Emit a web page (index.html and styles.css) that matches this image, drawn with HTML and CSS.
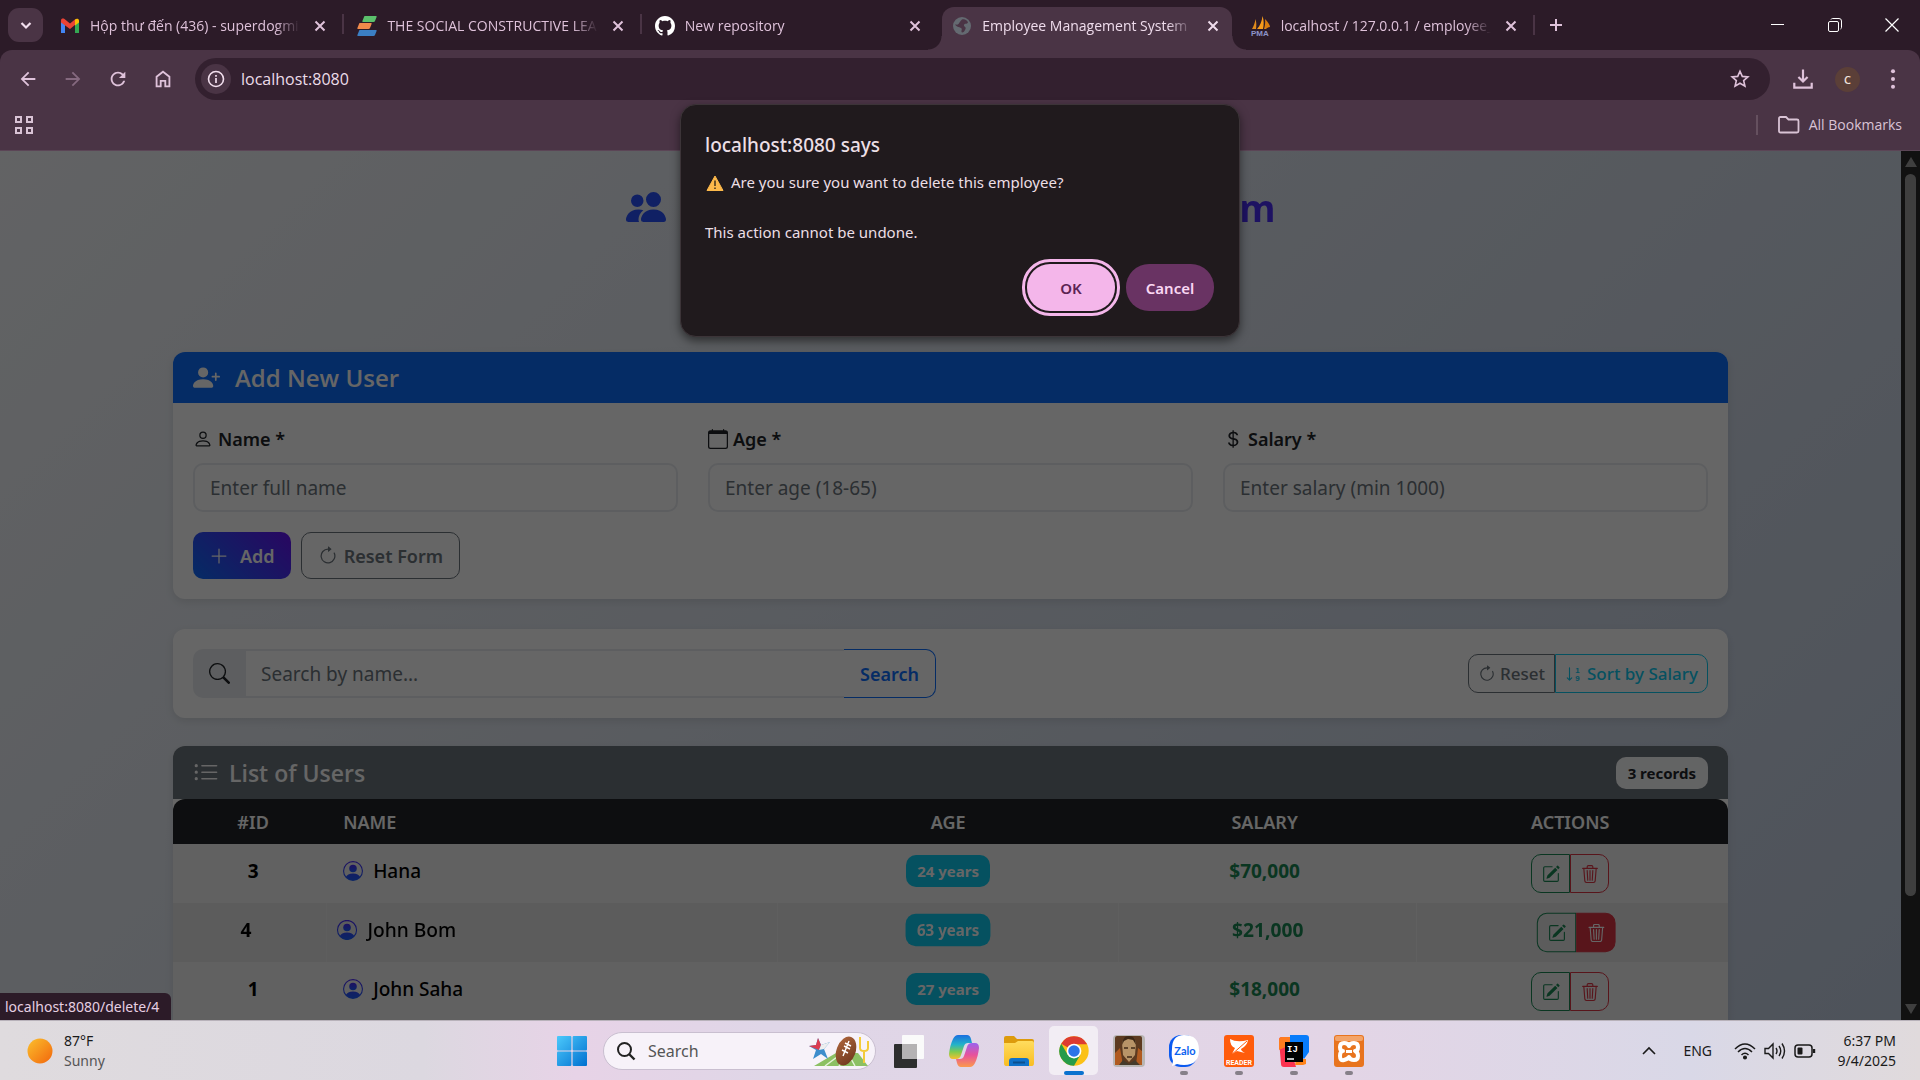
FILE: index.html
```html
<!DOCTYPE html>
<html lang="en">
<head>
<meta charset="utf-8">
<meta name="viewport" content="width=device-width, initial-scale=1">
<title>Employee Management System</title>
<link rel="stylesheet" href="styles.css">
</head>
<body>
<svg class="sprite" width="0" height="0" aria-hidden="true">
  <defs>
    <linearGradient id="g-brand-v" x1="0" y1="1" x2="0" y2="0"><stop offset="0" stop-color="#1c5ffb"/><stop offset="1" stop-color="#4d2af6"/></linearGradient>
    <linearGradient id="g-sun" x1="0" y1="0" x2="1" y2="1"><stop offset="0" stop-color="#fbc02d"/><stop offset="1" stop-color="#f2660c"/></linearGradient>
    <linearGradient id="g-win" gradientUnits="userSpaceOnUse" x1="0" y1="0" x2="30" y2="30"><stop offset="0" stop-color="#4cc9fb"/><stop offset="1" stop-color="#0070d0"/></linearGradient>
    <linearGradient id="g-folder" x1="0" y1="0" x2="0" y2="1"><stop offset="0" stop-color="#ffdc5e"/><stop offset="1" stop-color="#f9bd23"/></linearGradient>
    <linearGradient id="g-cop1" x1="0" y1="0" x2="0" y2="1"><stop offset="0" stop-color="#1a6fe0"/><stop offset=".4" stop-color="#22b3c9"/><stop offset=".7" stop-color="#7fcb4d"/><stop offset="1" stop-color="#f6c12e"/></linearGradient>
    <linearGradient id="g-cop2" x1="0" y1="0" x2="0" y2="1"><stop offset="0" stop-color="#9a63ee"/><stop offset=".5" stop-color="#e8529b"/><stop offset="1" stop-color="#fb9a4b"/></linearGradient>
    <linearGradient id="g-ball" x1="0" y1="0" x2="1" y2="1"><stop offset="0" stop-color="#b0673c"/><stop offset="1" stop-color="#6b341c"/></linearGradient>
    <symbol id="i-people" viewBox="0 0 16 16"><path d="M7 14s-1 0-1-1 1-4 5-4 5 3 5 4-1 1-1 1zm4-6a3 3 0 1 0 0-6 3 3 0 0 0 0 6m-5.784 6A2.24 2.24 0 0 1 5 13c0-1.355.68-2.75 1.936-3.72A6.3 6.3 0 0 0 5 9c-4 0-5 3-5 4s1 1 1 1zM4.5 8a2.5 2.5 0 1 0 0-5 2.5 2.5 0 0 0 0 5"/></symbol>
    <symbol id="i-person-plus" viewBox="0 0 16 16"><path d="M1 14s-1 0-1-1 1-4 6-4 6 3 6 4-1 1-1 1zm5-6a3 3 0 1 0 0-6 3 3 0 0 0 0 6"/><path d="M13.5 5a.5.5 0 0 1 .5.5V7h1.5a.5.5 0 0 1 0 1H14v1.5a.5.5 0 0 1-1 0V8h-1.5a.5.5 0 0 1 0-1H13V5.5a.5.5 0 0 1 .5-.5"/></symbol>
    <symbol id="i-person" viewBox="0 0 16 16"><path d="M8 8a3 3 0 1 0 0-6 3 3 0 0 0 0 6m2-3a2 2 0 1 1-4 0 2 2 0 0 1 4 0m4 8c0 1-1 1-1 1H3s-1 0-1-1 1-4 6-4 6 3 6 4m-1-.004c-.001-.246-.154-.986-.832-1.664C11.516 10.68 10.289 10 8 10s-3.516.68-4.168 1.332c-.678.678-.83 1.418-.832 1.664z"/></symbol>
    <symbol id="i-calendar" viewBox="0 0 16 16"><path d="M3.5 0a.5.5 0 0 1 .5.5V1h8V.5a.5.5 0 0 1 1 0V1h1a2 2 0 0 1 2 2v11a2 2 0 0 1-2 2H2a2 2 0 0 1-2-2V3a2 2 0 0 1 2-2h1V.5a.5.5 0 0 1 .5-.5M1 4v10a1 1 0 0 0 1 1h12a1 1 0 0 0 1-1V4z"/></symbol>
    <symbol id="i-dollar" viewBox="0 0 16 16"><path d="M4 10.781c.148 1.667 1.513 2.85 3.591 3.003V15h1.043v-1.216c2.27-.179 3.678-1.438 3.678-3.3 0-1.59-.947-2.51-2.956-3.028l-.722-.187V3.467c1.122.11 1.879.714 2.07 1.616h1.47c-.166-1.6-1.54-2.748-3.54-2.875V1H7.591v1.233c-1.939.23-3.27 1.472-3.27 3.156 0 1.454.966 2.483 2.661 2.917l.61.162v4.031c-1.149-.17-1.94-.8-2.131-1.718zm3.391-3.836c-1.043-.263-1.6-.825-1.6-1.616 0-.944.704-1.641 1.8-1.828v3.495l-.2-.05zm1.591 1.872c1.287.323 1.852.859 1.852 1.769 0 1.097-.826 1.828-2.2 1.939V8.73z"/></symbol>
    <symbol id="i-clockwise" viewBox="0 0 16 16"><path fill-rule="evenodd" d="M8 3a5 5 0 1 0 4.546 2.914.5.5 0 0 1 .908-.417A6 6 0 1 1 8 2z"/><path d="M8 4.466V.534a.25.25 0 0 1 .41-.192l2.36 1.966c.12.1.12.284 0 .384L8.41 4.658A.25.25 0 0 1 8 4.466"/></symbol>
    <symbol id="i-plus" viewBox="0 0 16 16"><path d="M8 2a.5.5 0 0 1 .5.5v5h5a.5.5 0 0 1 0 1h-5v5a.5.5 0 0 1-1 0v-5h-5a.5.5 0 0 1 0-1h5v-5A.5.5 0 0 1 8 2"/></symbol>
    <symbol id="i-search" viewBox="0 0 16 16"><path d="M11.742 10.344a6.5 6.5 0 1 0-1.397 1.398h-.001q.044.06.098.115l3.85 3.85a1 1 0 0 0 1.415-1.414l-3.85-3.85a1 1 0 0 0-.115-.1zM12 6.5a5.5 5.5 0 1 1-11 0 5.5 5.5 0 0 1 11 0"/></symbol>
    <symbol id="i-list" viewBox="0 0 16 16"><path d="M5 11.5a.5.5 0 0 1 .5-.5h9a.5.5 0 0 1 0 1h-9a.5.5 0 0 1-.5-.5m0-4a.5.5 0 0 1 .5-.5h9a.5.5 0 0 1 0 1h-9a.5.5 0 0 1-.5-.5m0-4a.5.5 0 0 1 .5-.5h9a.5.5 0 0 1 0 1h-9a.5.5 0 0 1-.5-.5m-3 1a1 1 0 1 0 0-2 1 1 0 0 0 0 2m0 4a1 1 0 1 0 0-2 1 1 0 0 0 0 2m0 4a1 1 0 1 0 0-2 1 1 0 0 0 0 2"/></symbol>
    <symbol id="i-avatar" viewBox="0 0 16 16"><path d="M11 6a3 3 0 1 1-6 0 3 3 0 0 1 6 0"/><path fill-rule="evenodd" d="M0 8a8 8 0 1 1 16 0A8 8 0 0 1 0 8m8-7a7 7 0 0 0-5.468 11.37C3.242 11.226 4.805 10 8 10s4.757 1.225 5.468 2.37A7 7 0 0 0 8 1"/></symbol>
    <symbol id="i-edit" viewBox="0 0 16 16"><path d="M15.502 1.94a.5.5 0 0 1 0 .706L14.459 3.69l-2-2L13.502.646a.5.5 0 0 1 .707 0l1.293 1.293zm-1.75 2.456-2-2L4.939 9.21a.5.5 0 0 0-.121.196l-.805 2.414a.25.25 0 0 0 .316.316l2.414-.805a.5.5 0 0 0 .196-.12l6.813-6.814z"/><path fill-rule="evenodd" d="M1 13.5A1.5 1.5 0 0 0 2.5 15h11a1.5 1.5 0 0 0 1.5-1.5v-6a.5.5 0 0 0-1 0v6a.5.5 0 0 1-.5.5h-11a.5.5 0 0 1-.5-.5v-11a.5.5 0 0 1 .5-.5H9a.5.5 0 0 0 0-1H2.5A1.5 1.5 0 0 0 1 2.5z"/></symbol>
    <symbol id="i-trash" viewBox="0 0 16 16"><path d="M6.5 1h3a.5.5 0 0 1 .5.5v1H6v-1a.5.5 0 0 1 .5-.5M11 2.5v-1A1.5 1.5 0 0 0 9.5 0h-3A1.5 1.5 0 0 0 5 1.5v1H1.5a.5.5 0 0 0 0 1h.538l.853 10.66A2 2 0 0 0 4.885 16h6.23a2 2 0 0 0 1.994-1.84l.853-10.66h.538a.5.5 0 0 0 0-1zm1.958 1-.846 10.58a1 1 0 0 1-.997.92h-6.23a1 1 0 0 1-.997-.92L3.042 3.5zm-7.487 1a.5.5 0 0 1 .528.47l.5 8.5a.5.5 0 0 1-.998.06L5 5.03a.5.5 0 0 1 .47-.53Zm5.058 0a.5.5 0 0 1 .47.53l-.5 8.5a.5.5 0 1 1-.998-.06l.5-8.5a.5.5 0 0 1 .528-.47M8 4.5a.5.5 0 0 1 .5.5v8.5a.5.5 0 0 1-1 0V5a.5.5 0 0 1 .5-.5"/></symbol>
    <symbol id="i-sort" viewBox="0 0 16 16"><path d="M4.5 2.5a.5.5 0 0 0-1 0v9.793l-1.146-1.147a.5.5 0 0 0-.708.708l2 1.999.007.007a.497.497 0 0 0 .7-.006l2-2a.5.5 0 0 0-.707-.708L4.5 12.293z"/><text x="9" y="7" font-family="Liberation Sans, sans-serif" font-size="7" font-weight="700">1</text><text x="9" y="14" font-family="Liberation Sans, sans-serif" font-size="7" font-weight="700">9</text></symbol>
    <symbol id="i-x" viewBox="0 0 12 12"><path d="M1.5 1.5l9 9M10.500 1.5l-9 9" fill="none" stroke="currentColor" stroke-width="2"/></symbol>
  </defs>
</svg>

<header class="browser">
  <div class="tabstrip">
    <button class="tab-search" aria-label="Search tabs"><svg width="14" height="14" viewBox="0 0 14 14"><path d="M2.500 5L7 9.500 11.500 5" fill="none" stroke="currentColor" stroke-width="2.200"/></svg></button>
    <nav class="tabs">
      <div class="tab">
        <svg class="fav" viewBox="0 0 20 20"><path d="M1 4.500V17h4V9z" fill="#4285f4"/><path d="M19 4.500V17h-4V9z" fill="#34a853"/><path d="M1 4.500c0-2 2-2.500 3.500-1.500L10 7.500 15.500 3v5.500L10 13 1 6.500z" fill="#ea4335"/><path d="M15 3.500c1.500-1.500 4-1 4 1V6.500L15 9.500z" fill="#fbbc04"/></svg>
        <a class="tab-title" href="#">Hộp thư đến (436) - superdogmilk</a>
        <button class="tab-close" aria-label="Close tab"><svg width="12" height="12"><use href="#i-x"/></svg></button>
      </div>
      <div class="tab ruled">
        <svg class="fav" viewBox="0 0 20 20"><path d="M7.500 0H19q1 0 .6 1L18 5q-.4 1-1.500 1H6q-1 0-.6-1L7 1z" fill="#5bc06c"/><path d="M2.500 7H14q1 0 .6 1L13 12q-.4 1-1.500 1H1q-1 0-.6-1L2 8z" fill="#f08a4b"/><path d="M2.500 14H19q1 0 .6 1L18 19q-.4 1-1.500 1H1q-1 0-.6-1L2 15z" fill="#3b7fc4"/></svg>
        <a class="tab-title" href="#">THE SOCIAL CONSTRUCTIVE LEARNING</a>
        <button class="tab-close" aria-label="Close tab"><svg width="12" height="12"><use href="#i-x"/></svg></button>
      </div>
      <div class="tab ruled">
        <svg class="fav" viewBox="0 0 16 16"><path fill="#fff" d="M8 0C3.580 0 0 3.580 0 8c0 3.540 2.290 6.530 5.470 7.590.4.070.55-.17.55-.38 0-.19-.01-.82-.01-1.490-2.010.37-2.530-.49-2.690-.94-.09-.23-.48-.94-.82-1.130-.28-.15-.68-.52-.01-.53.63-.01 1.080.58 1.230.82.72 1.210 1.870.87 2.330.66.070-.52.28-.87.51-1.070-1.780-.2-3.640-.89-3.640-3.950 0-.87.31-1.590.82-2.150-.08-.2-.36-1.020.08-2.120 0 0 .67-.21 2.200.82.64-.18 1.320-.27 2-.27s1.360.09 2 .27c1.530-1.040 2.200-.82 2.200-.82.44 1.100.16 1.920.08 2.120.51.56.82 1.270.82 2.150 0 3.070-1.870 3.750-3.650 3.950.29.25.54.73.54 1.480 0 1.070-.01 1.930-.01 2.200 0 .21.15.46.55.38A8.010 8.010 0 0 0 16 8c0-4.420-3.580-8-8-8"/></svg>
        <a class="tab-title" href="#">New repository</a>
        <button class="tab-close" aria-label="Close tab"><svg width="12" height="12"><use href="#i-x"/></svg></button>
      </div>
      <div class="tab active">
        <svg class="fav" viewBox="0 0 20 20"><circle cx="10" cy="10" r="9" fill="#646a71"/><path d="M10 3.500c2.500-1 5.500 1 6 3-1 2-3.500.5-4 2.500s2.500 1.500 1.500 4-2 3.500-3.500 3.500c-1.500-1.500 1-3.500-1-4.500S4 10.500 3 8.500c1.500 0 2.500.5 3.500-.5S8 5 10 3.500z" fill="#4a3445"/></svg>
        <a class="tab-title" href="#">Employee Management System</a>
        <button class="tab-close" aria-label="Close tab"><svg width="12" height="12"><use href="#i-x"/></svg></button>
      </div>
      <div class="tab">
        <svg class="fav" viewBox="0 0 20 20"><path d="M1 13C3 10 4 6 4.500 3c1 3 1 7 .5 10z" fill="#e08a1c"/><path d="M6 13c3-3 5-8 5.500-13 1.500 4 1.500 9 .5 13z" fill="#f89c1c"/><path d="M13 13c1-3 1.500-7 1-10 3 3 5 6 5 8-2 0-3 1-4 2z" fill="#d97d10"/><text x="0" y="20" font-family="Liberation Sans, sans-serif" font-weight="700" font-size="8" fill="#8c93c8">PMA</text></svg>
        <a class="tab-title" href="#">localhost / 127.0.0.1 / employee_db</a>
        <button class="tab-close" aria-label="Close tab"><svg width="12" height="12"><use href="#i-x"/></svg></button>
      </div>
    </nav>
    <button class="new-tab ruled" aria-label="New tab"><svg width="14" height="14" viewBox="0 0 14 14"><path d="M7 1v12M1 7h12" stroke="currentColor" stroke-width="2"/></svg></button>
    <div class="win-controls">
      <button aria-label="Minimize"><svg width="14" height="14" viewBox="0 0 14 14"><path d="M0 6.500h13" stroke="#fff"/></svg></button>
      <button aria-label="Restore"><svg width="14" height="14" viewBox="0 0 14 14" fill="none" stroke="#fff"><rect x=".5" y="3.500" width="10" height="10" rx="1.500"/><path d="M3 1.500q.5-1 1.500-1h6.500q2.500 0 2.500 2.500v6.500q0 1-1 1.500"/></svg></button>
      <button aria-label="Close"><svg width="14" height="14" viewBox="0 0 14 14"><path d="M.5.5l13 13M13.500.5l-13 13" stroke="#fff" stroke-width="1.200"/></svg></button>
    </div>
  </div>

  <div class="toolbar">
    <button class="tool" aria-label="Back"><svg viewBox="0 0 24 24"><path d="M20 11H7.830l5.590-5.590L12 4l-8 8 8 8 1.410-1.410L7.830 13H20z"/></svg></button>
    <button class="tool faded" aria-label="Forward"><svg viewBox="0 0 24 24"><path d="M4 11h12.170l-5.590-5.590L12 4l8 8-8 8-1.410-1.410L16.170 13H4z"/></svg></button>
    <button class="tool" aria-label="Reload"><svg viewBox="0 0 24 24"><path d="M17.650 6.350A7.960 7.960 0 0 0 12 4c-4.420 0-7.990 3.580-7.990 8s3.570 8 7.990 8c3.730 0 6.840-2.550 7.730-6h-2.080A5.990 5.990 0 0 1 12 18c-3.310 0-6-2.690-6-6s2.690-6 6-6c1.660 0 3.140.69 4.220 1.780L13 11h7V4z"/></svg></button>
    <button class="tool" aria-label="Home"><svg viewBox="0 0 24 24"><path d="M5 20V9.500L12 4l7 5.500V20h-4.500v-6h-5v6z" fill="none" stroke="currentColor" stroke-width="2"/></svg></button>
    <div class="omnibox">
      <button class="site-info" aria-label="View site information"><svg width="18" height="18" viewBox="0 0 18 18"><circle cx="9" cy="9" r="7.500" fill="none" stroke="currentColor" stroke-width="1.600"/><path d="M9 8v5M9 5v1.700" stroke="currentColor" stroke-width="1.700"/></svg></button>
      <input class="url" type="text" value="localhost:8080" aria-label="Address">
      <button class="star" aria-label="Bookmark this tab"><svg width="20" height="20" viewBox="0 0 20 20"><path d="M10 2.200l2.300 5.200 5.600.5-4.250 3.700 1.300 5.600L10 14.200l-4.950 3 1.300-5.600L2.100 7.900l5.600-.5z" fill="none" stroke="currentColor" stroke-width="1.600"/></svg></button>
    </div>
    <button class="tool wide" aria-label="Downloads"><svg viewBox="0 0 24 24"><path d="M12 1.500v13M7 9.800l5 5 5-5M2.500 16v5.500h19V16" fill="none" stroke="currentColor" stroke-width="2.400"/></svg></button>
    <button class="profile" aria-label="Profile">C</button>
    <button class="tool" aria-label="Menu"><svg viewBox="0 0 24 24"><circle cx="12" cy="3.500" r="2.200"/><circle cx="12" cy="12" r="2.200"/><circle cx="12" cy="20.500" r="2.200"/></svg></button>
  </div>

  <div class="bookmarks">
    <button class="apps" aria-label="Apps"><svg width="20" height="20" viewBox="0 0 20 20" fill="none" stroke="currentColor" stroke-width="2"><path d="M2 2h5v5H2zM13 2h5v5h-5zM2 13h5v5H2zM13 13h5v5h-5z"/></svg></button>
    <a class="all-bookmarks" href="#"><svg width="22" height="18" viewBox="0 0 22 18"><path d="M1 2.500Q1 1 2.500 1H8l2.500 2.500h8.500q1.500 0 1.500 1.500v10q0 1.500-1.500 1.500H2.500Q1 16.500 1 15z" fill="none" stroke="currentColor" stroke-width="1.800"/></svg>All Bookmarks</a>
  </div>
</header>

<main class="viewport">
  <div class="page">
    <div class="container">
      <h1 class="page-title"><svg class="title-icon"><use href="#i-people"/></svg><span class="title-text">Employee Management System</span></h1>

      <section class="card form-card">
        <h2 class="card-head blue"><svg width="27" height="27"><use href="#i-person-plus"/></svg>Add New User</h2>
        <form class="card-body">
          <div class="fields">
            <div class="field"><label for="name"><svg><use href="#i-person"/></svg>Name *</label><input id="name" type="text" placeholder="Enter full name"></div>
            <div class="field"><label for="age"><svg><use href="#i-calendar"/></svg>Age *</label><input id="age" type="text" placeholder="Enter age (18-65)"></div>
            <div class="field"><label for="salary"><svg><use href="#i-dollar"/></svg>Salary *</label><input id="salary" type="text" placeholder="Enter salary (min 1000)"></div>
          </div>
          <div class="form-actions">
            <button type="button" class="btn btn-add"><svg><use href="#i-plus"/></svg>Add</button>
            <button type="button" class="btn btn-reset"><svg><use href="#i-clockwise"/></svg>Reset Form</button>
          </div>
        </form>
      </section>

      <section class="card search-card">
        <form class="search-group">
          <label class="search-icon" for="q" aria-label="Search by name"><svg width="21" height="21"><use href="#i-search"/></svg></label>
          <input id="q" type="text" placeholder="Search by name...">
          <button type="button" class="btn-search">Search</button>
        </form>
        <div class="list-tools">
          <button class="tool-reset"><svg><use href="#i-clockwise"/></svg>Reset</button>
          <button class="tool-sort"><svg><use href="#i-sort"/></svg>Sort by Salary</button>
        </div>
      </section>

      <section class="card list-card">
        <div class="card-head grey">
          <h2><svg width="26" height="26"><use href="#i-list"/></svg>List of Users</h2>
          <span class="records">3 records</span>
        </div>
        <table>
          <colgroup><col class="c-id"><col class="c-name"><col class="c-age"><col class="c-salary"><col class="c-actions"></colgroup>
          <thead><tr><th>#ID</th><th class="left">NAME</th><th>AGE</th><th>SALARY</th><th>ACTIONS</th></tr></thead>
          <tbody>
            <tr><td class="id">3</td><td class="left"><span class="person"><svg><use href="#i-avatar"/></svg>Hana</span></td><td><span class="years">24 years</span></td><td class="money">$70,000</td>
              <td><div class="row-actions"><button class="edit" aria-label="Edit Hana"><svg><use href="#i-edit"/></svg></button><button class="delete" aria-label="Delete Hana"><svg><use href="#i-trash"/></svg></button></div></td></tr>
            <tr class="hovered"><td class="id">4</td><td class="left"><span class="person"><svg><use href="#i-avatar"/></svg>John Bom</span></td><td><span class="years">63 years</span></td><td class="money">$21,000</td>
              <td><div class="row-actions"><button class="edit" aria-label="Edit John Bom"><svg><use href="#i-edit"/></svg></button><button class="delete on" aria-label="Delete John Bom"><svg><use href="#i-trash"/></svg></button></div></td></tr>
            <tr><td class="id">1</td><td class="left"><span class="person"><svg><use href="#i-avatar"/></svg>John Saha</span></td><td><span class="years">27 years</span></td><td class="money">$18,000</td>
              <td><div class="row-actions"><button class="edit" aria-label="Edit John Saha"><svg><use href="#i-edit"/></svg></button><button class="delete" aria-label="Delete John Saha"><svg><use href="#i-trash"/></svg></button></div></td></tr>
          </tbody>
        </table>
      </section>
    </div>
  </div>
  <div class="scrollbar"><span class="arrow up"></span><span class="thumb"></span><span class="arrow down"></span></div>
  <div class="backdrop"></div>
  <div class="status">localhost:8080/delete/4</div>
</main>

<dialog class="alert" open aria-labelledby="alert-title">
  <h2 id="alert-title">localhost:8080 says</h2>
  <p><svg width="20" height="20" viewBox="0 0 20 20"><path d="M10 3L18 17.500H2z" fill="#fdb94b" stroke="#fdb94b" stroke-linejoin="round"/><path d="M10 7.500v5.500M10 14.500v1.500" stroke="#4d3a1d" stroke-width="1.600"/></svg>Are you sure you want to delete this employee?</p>
  <p class="second">This action cannot be undone.</p>
  <div class="alert-actions"><button class="ok">OK</button><button class="cancel">Cancel</button></div>
</dialog>

<footer class="taskbar">
  <div class="weather">
    <svg width="26" height="26" viewBox="0 0 26 26"><circle cx="13" cy="13" r="12.500" fill="url(#g-sun)"/></svg>
    <div><span>87°F</span><span class="muted">Sunny</span></div>
  </div>
  <div class="task-center">
    <button class="app" aria-label="Start"><svg width="30" height="30" viewBox="0 0 30 30" fill="url(#g-win)"><rect width="14.400" height="14.400" rx="1"/><rect x="15.600" width="14.400" height="14.400" rx="1"/><rect y="15.600" width="14.400" height="14.400" rx="1"/><rect x="15.600" y="15.600" width="14.400" height="14.400" rx="1"/></svg></button>
    <label class="task-search" for="task-q">
      <svg width="20" height="20" viewBox="0 0 20 20"><circle cx="8.500" cy="8.500" r="6.500" fill="none" stroke="#222" stroke-width="2"/><path d="M13 13l5.500 5.500" stroke="#222" stroke-width="2.400"/></svg>
      <input id="task-q" type="text" placeholder="Search">
      <svg width="62" height="34" viewBox="0 0 62 34"><path d="M5 32L27 19h22l10 13z" fill="#8cc063"/><path d="M16 32l12-9M30 32l6-9M46 32l-5-9" stroke="#e5f3d8" stroke-width="1.500"/><path d="M51 3v11q0 3 4 3t4-3V7M55 17v12" fill="none" stroke="#f3cb3b" stroke-width="2"/><path d="M9 4l3 7 9-3-6 7 4 10-7-5-8 5 3-9-7-4 7-1z" fill="#3d8dcc"/><path d="M9 4l3 7-2 5-10-4 7-1z" fill="#dc3c50"/><path d="M12 11l9-3-6 7-5 1z" fill="#eee"/><ellipse cx="37" cy="17" rx="9.500" ry="15" transform="rotate(20 37 17)" fill="url(#g-ball)"/><path d="M40 7l-6 15M36 9l6 3M35 12l6 3M33 16l6 3" stroke="#fff" stroke-width="1.400"/></svg>
    </label>
    <button class="app" aria-label="Task view"><svg width="30" height="34" viewBox="0 0 30 34"><rect x="8" y="1" width="22" height="24" rx="1" fill="#fafafa"/><rect y="10" width="23" height="24" rx="1" fill="#2d2e2e"/><rect x="8" y="10" width="15" height="15" fill="#b4b2b3"/></svg></button>
    <button class="app" aria-label="Copilot"><svg width="30" height="32" viewBox="0 0 30 32"><path d="M9 0h9q3 0 4 4l1 4h-4q-3 0-4 3l-3 9q-1 4-5 4H4q-4 0-4-5Q1 10 4 4 6 0 9 0z" fill="url(#g-cop1)"/><path d="M21 32h-9q-3 0-4-4l-1-4h4q3 0 4-3l3-9q1-4 5-4h3q4 0 4 5-1 9-4 15-2 4-5 4z" fill="url(#g-cop2)"/></svg></button>
    <button class="app" aria-label="File Explorer"><svg width="30" height="32" viewBox="0 0 30 32"><path d="M0 3q0-2 2-2h8l3 3h15q2 0 2 2v8H0z" fill="#dd9b0c"/><path d="M0 8h11l3-2h14q2 0 2 2v20q0 3-2 3H2q-2 0-2-3z" fill="url(#g-folder)"/><path d="M5 31v-5q0-3 3-3h14q3 0 3 3v5z" fill="#1072c9"/><path d="M9 27.500h12" stroke="#0c508f" stroke-width="2"/></svg></button>
    <button class="app current" aria-label="Chrome"><svg width="30" height="30" viewBox="0 0 48 48"><circle cx="24" cy="24" r="23.500" fill="#fbc116"/><path d="M24 24L3.600 12.200A23.500 23.500 0 0 1 44.400 12.200L44.300 13H24z" fill="#dd3b30"/><path d="M3.600 12.200A23.500 23.500 0 0 0 24 47.500l10.200-17.600L24 24 14 30z" fill="#269b49"/><circle cx="24" cy="24" r="11.800" fill="#fff"/><circle cx="24" cy="24" r="9.200" fill="#2b74e8"/></svg></button>
    <button class="app" aria-label="Game"><svg width="32" height="32" viewBox="0 0 32 32"><rect width="32" height="32" rx="4" fill="#b9b6b4"/><rect x="2" y="1" width="27" height="29" rx="2" fill="#5d3a20"/><path d="M2 30V18l5-5 3 17zM29 30V16l-4-3-2 17z" fill="#b05a20"/><path d="M9 8q1-6 7-6t7 6l-1 12-6 7-6-7z" fill="#b89468"/><path d="M9 10Q9 1 16 1t7 9l-3-5-5-1-4 2z" fill="#3e2816"/><path d="M11 13h4M18 13h4M14 22h5" stroke="#402a18" stroke-width="1.500"/><path d="M6 30l4-5 6 4 6-4 5 5z" fill="#453b2b"/></svg></button>
    <button class="app running" aria-label="Zalo"><svg width="30" height="32" viewBox="0 0 30 32"><rect width="28" height="32" rx="12" fill="#0a5af0"/><path d="M15 0q15 0 15 15t-15 15Q11 30 8 29L3 31l1-5Q2 21 3 14 3 0 15 0z" fill="#fff"/><text x="16" y="20" text-anchor="middle" font-family="Lato, sans-serif" font-weight="700" font-size="11" fill="#0a63f0">Zalo</text></svg></button>
    <button class="app running" aria-label="Reader"><svg width="30" height="32" viewBox="0 0 30 32"><rect width="30" height="32" rx="3" fill="#ff5c0b"/><path d="M6 4q7 4 18 1-1 6-7 9 0 2 4 4l-8-2-5 3 3-6Q6 11 6 4z" fill="#fff"/><path d="M6 21L23 6" stroke="#ff5c0b"/><text x="15" y="30" text-anchor="middle" font-family="Roboto, sans-serif" font-weight="700" font-size="7" fill="#fff">READER</text></svg></button>
    <button class="app running" aria-label="IntelliJ IDEA"><svg width="30" height="32" viewBox="0 0 30 32"><path d="M0 5q0-3 3-3h8v10l6 20H5q-3 0-3-3z" fill="#fb3350"/><path d="M0 5q0-3 3-3h8v8L0 15z" fill="#ff7c1f"/><path d="M11 0h16q3 0 3 3v14l-5 7-14-14z" fill="#087cfa"/><path d="M17 24h10v5l-3 1h-8z" fill="#ff8318"/><rect x="6" y="7" width="18" height="20" fill="#000"/><text x="8" y="17" font-family="Liberation Mono, monospace" font-weight="700" font-size="9" fill="#fff">IJ</text><path d="M8 24h7" stroke="#fff" stroke-width="1.500"/></svg></button>
    <button class="app running" aria-label="XAMPP"><svg width="30" height="32" viewBox="0 0 30 32"><rect width="30" height="32" rx="3" fill="#e8741e"/><rect x="1" y="1" width="28" height="5" rx="2" fill="#f3a468"/><path d="M10 8q-4 0-4 4t3 4q-3 0-3 5t4 4 5-3q1 3 5 3t4-4-3-5q3 0 3-4t-4-4-5 3q-1-3-5-3z" fill="none" stroke="#fff" stroke-width="4" stroke-linejoin="round"/><path d="M12 16.500h6" stroke="#fff" stroke-width="3"/></svg></button>
  </div>
  <div class="tray">
    <button aria-label="Show hidden icons"><svg width="14" height="14" viewBox="0 0 14 14"><path d="M1 10l6-6 6 6" fill="none" stroke="#1a1a1a" stroke-width="1.600"/></svg></button>
    <span class="lang">ENG</span>
    <div class="tray-icons">
      <svg width="22" height="18" viewBox="0 0 22 18" fill="none" stroke="#1a1a1a" stroke-width="1.500"><path d="M1 7q10-10 20 0M4 10q7-7 14 0M7.500 13q3.500-3.500 7 0"/><circle cx="11" cy="15.500" r="1.300" fill="#1a1a1a"/></svg>
      <svg width="22" height="18" viewBox="0 0 22 18" fill="none" stroke="#1a1a1a" stroke-width="1.400"><path d="M1 6.500h3.500L9 2v14l-4.500-4.500H1zM12 6q2 3 0 6M15 4q3.500 5 0 10M18 1.500q5 7.500 0 15"/></svg>
      <svg width="22" height="18" viewBox="0 0 22 18"><rect x="1" y="3" width="17" height="12" rx="3" fill="none" stroke="#1a1a1a" stroke-width="1.500"/><rect x="3.500" y="5.500" width="5" height="7" rx="1" fill="#1a1a1a"/><path d="M20 7v4" stroke="#1a1a1a" stroke-width="2.400"/></svg>
    </div>
    <div class="clock"><span>6:37 PM</span><span>9/4/2025</span></div>
  </div>
</footer>
</body>
</html>
```
FILE: styles.css
```css
* { box-sizing: border-box; }

body {
  margin: 0;
  height: 100vh;
  display: flex;
  flex-direction: column;
  overflow: hidden;
  position: relative;
  font-family: "Noto Sans", "Open Sans", sans-serif;
  font-size: 18px;
}

button, input { font: inherit; color: inherit; }
button { border: 0; background: none; padding: 0; display: inline-flex; align-items: center; justify-content: center; }
h1, h2, p { margin: 0; }
a { color: inherit; text-decoration: none; }
svg { display: block; flex: none; }
svg:not([fill]) { fill: currentColor; }
.sprite { position: absolute; }

/* Browser frame */
.browser { flex: none; background: #2c1b28; color: #dfc2da; font-family: "Open Sans", "Noto Sans", sans-serif; font-size: 14px; }
.tabstrip { display: flex; align-items: center; height: 50px; padding-left: 8px; }
.tab-search { width: 35px; height: 34px; border-radius: 11px; background: #4a3445; color: #f2dfee; }
.tabs { display: flex; flex: 0 1 1488px; min-width: 0; height: 50px; margin-left: 7px; }
.tab { position: relative; display: flex; align-items: center; flex: 1 1 0; min-width: 0; padding: 0 21px 6px 10px; height: 43px; align-self: flex-end; }
.fav { width: 20px; height: 20px; margin-right: 10px; }
.tab-title { flex: 1; min-width: 0; overflow: hidden; white-space: nowrap; margin-right: 14px; line-height: 20px; mask-image: linear-gradient(to right, #000 88%, transparent); }
.tab.active { background: #4a3445; color: #efdcec; border-radius: 12px 12px 0 0; padding-right: 13px; margin-right: 9px; }
.tab.active::before, .tab.active::after { content: ""; position: absolute; bottom: 0; width: 14px; height: 14px; }
.tab.active::before { left: -14px; background: radial-gradient(circle at 0 0, transparent 13px, #4a3445 14px); }
.tab.active::after { right: -14px; background: radial-gradient(circle at 100% 0, transparent 13px, #4a3445 14px); }
.ruled::before { content: ""; position: absolute; left: -5px; top: 7px; width: 2px; height: 20px; background: #4a3445; }
.new-tab { position: relative; width: 36px; height: 34px; }
.win-controls { display: flex; margin-left: auto; }
.win-controls button { width: 57px; height: 50px; }

.toolbar { display: flex; align-items: center; height: 58px; padding: 0 5px; background: #4a3445; border-radius: 12px 12px 0 0; }
.tool { width: 45px; height: 36px; }
.tool svg { width: 22px; height: 22px; }
.tool.wide { margin-left: 10px; }
.faded { color: #85697f; }
.omnibox { display: flex; align-items: center; flex: 1; height: 42px; margin-left: 10px; padding: 0 20px 0 6px; border-radius: 21px; background: #33202f; }
.site-info { width: 30px; height: 30px; border-radius: 50%; background: #4a3445; color: #f2dfee; }
.url { flex: 1; min-width: 0; margin-left: 10px; padding: 0; border: 0; outline: 0; background: none; color: #ecdce9; font-size: 16px; }
.profile { width: 25px; height: 25px; margin: 0 10px; border-radius: 50%; background: #5b3f38; color: #f1e2dc; font-size: 11px; font-weight: 600; }

.bookmarks { display: flex; align-items: center; justify-content: space-between; height: 43px; padding: 0 18px 8px 14px; background: #4a3445; border-bottom: 1px solid #5b4556; color: #d9c3d5; }
.all-bookmarks { display: flex; align-items: center; gap: 9px; padding-left: 20px; border-left: 2px solid #65505f; line-height: 20px; }

/* Page area */
.viewport { position: relative; flex: 1; min-height: 0; display: flex; overflow: hidden; }
.page { flex: 1; min-width: 0; overflow: hidden; background: linear-gradient(135deg, #f5f7fa 0%, #c3cfe2 100%); }
.container { width: calc(100% - 64px); max-width: 1555px; margin: 0 auto; padding-top: 30px; }
.page-title { display: flex; align-items: center; justify-content: center; height: 52px; margin-bottom: 119px; font-family: "Open Sans", "Noto Sans", sans-serif; font-size: 37px; font-weight: 700; background: linear-gradient(45deg, #0d6efd, #6610f2); }
.page-title { background-clip: text; -webkit-background-clip: text; color: transparent; }
svg.title-icon { width: 40px; height: 40px; margin-right: 32px; fill: #2850fa; }

.card { background: #fff; border-radius: 12px; overflow: hidden; box-shadow: 0 3px 8px rgba(0, 0, 0, .1); color: #212529; }
.card-head { display: flex; align-items: center; padding: 0 20px; color: #fff; font-family: "Open Sans", "Noto Sans", sans-serif; font-size: 24px; font-weight: 600; }
.card-head.blue { height: 51px; gap: 15px; background: #0d6efd; }
.card-head.grey { height: 53px; justify-content: space-between; background: #6c757d; }
.card-head h2 { display: flex; align-items: center; gap: 10px; font-size: 23px; font-weight: 600; }

.form-card { margin-bottom: 30px; }
.card-body { padding: 20px; }
.fields { display: grid; grid-template-columns: repeat(3, 1fr); gap: 30px; }
.field label { display: flex; align-items: center; gap: 5px; height: 32px; margin-bottom: 8px; font-weight: 600; }
.field label svg { width: 20px; height: 20px; }
.field input { width: 100%; height: 49px; padding: 0 15px; border: 2px solid #e9ecef; border-radius: 10px; background: #fff; font-size: 19px; }
input::placeholder { color: #6c757d; opacity: 1; }
.form-actions { display: flex; gap: 10px; margin-top: 20px; }
.btn { height: 47px; border-radius: 10px; font-weight: 600; }
.btn svg { width: 20px; height: 20px; }
.btn-add { gap: 11px; padding: 0 16px; color: #fff; background: linear-gradient(45deg, #0d6efd, #6610f2); }
.btn-reset { gap: 6px; padding: 0 16px; color: #6c757d; border: 1px solid #6c757d; }

.search-card { display: flex; align-items: center; justify-content: space-between; padding: 20px; margin-bottom: 28px; }
.search-group { display: flex; flex: 0 1 743px; min-width: 0; height: 49px; }
.search-icon { display: flex; align-items: center; justify-content: center; width: 53px; background: #e9ecef; border-radius: 10px 0 0 10px; }
.search-group input { flex: 1; min-width: 0; padding: 0 15px; border: 2px solid #e9ecef; border-width: 2px 0; border-radius: 0; background: #fff; font-size: 19px; }
.btn-search { width: 92px; color: #0d6efd; font-weight: 600; border: 1px solid #0d6efd; border-left: 0; border-radius: 0 10px 10px 0; }
.list-tools { display: flex; font-size: 17px; }
.list-tools button { height: 39px; gap: 4px; padding: 0 9px; border: 1px solid; font-weight: 500; }
.list-tools svg { width: 18px; height: 18px; }
.tool-reset { color: #6c757d; border-radius: 10px 0 0 10px; }
.tool-sort { color: #0dcaf0; border-radius: 0 10px 10px 0; }

.records { padding: 0 12px; border-radius: 10px; background: #f8f9fa; color: #212529; font-family: "Noto Sans", sans-serif; font-size: 15px; font-weight: 700; line-height: 32px; }
.list-card { padding-bottom: 10px; }
table { width: 100%; table-layout: fixed; border-collapse: collapse; }
.c-id { width: 10.3%; } .c-name { width: 28.7%; } .c-age { width: 21.7%; } .c-salary { width: 19%; } .c-actions { width: 20.3%; }
th { height: 45px; padding: 0 10px; background: #212529; color: #fff; font-size: 18px; font-weight: 600; }
th:first-child { border-top-left-radius: 12px; }
th:last-child { border-top-right-radius: 12px; }
td { height: 59px; padding: 10px 10px 0; background: #f2f2f2; text-align: center; vertical-align: top; color: #000; font-size: 19px; line-height: 34px; }
.left { text-align: left; }
.id { font-weight: 700; }
.person { display: flex; align-items: center; gap: 10px; height: 34px; font-weight: 500; }
.person svg { width: 20px; height: 20px; fill: url(#g-brand-v); }
.years { display: inline-block; margin-top: 1px; padding: 0 11px; border-radius: 10px; background: #0dcaf0; color: #fff; font-size: 15px; font-weight: 700; line-height: 32px; vertical-align: top; }
.money { color: #198754; font-weight: 700; }
.row-actions { display: flex; justify-content: center; }
.row-actions button { width: 39px; height: 39px; border: 1px solid; }
.row-actions svg { width: 18px; height: 18px; }
.edit { color: #198754; border-radius: 10px 0 0 10px; }
.delete { color: #dc3545; border-radius: 0 10px 10px 0; }
.row-actions .delete.on { color: #fff; background: #dc3545; border-color: #dc3545; }
.hovered { transform: scale(1.01); }
.hovered td { background: #e6e6e6; }

.scrollbar { flex: none; width: 19px; padding: 6px 0; display: flex; flex-direction: column; align-items: center; background: #2c2c2c; }
.thumb { flex: 0 1 722px; width: 11px; margin: 7px 0 auto; border-radius: 6px; background: #9f9f9f; }
.arrow { width: 0; height: 0; border: 6px solid transparent; }
.up { border-top: 0; border-bottom: 10px solid #9f9f9f; }
.down { border-bottom: 0; border-top: 10px solid #9f9f9f; }
.backdrop { position: absolute; inset: 0; background: rgba(0, 0, 0, .6); }
.status { position: absolute; left: 0; bottom: 0; padding: 0 12px 0 5px; border-radius: 0 6px 0 0; background: #2c1b28; color: #e6cfe2; font-size: 14px; line-height: 27px; }

/* Confirm dialog */
.alert { position: absolute; top: 104px; left: 0; right: 0; margin: 0 auto; width: 560px; height: 233px; padding: 26px 25px 24px 24px; border: 1px solid #3c3438; border-radius: 16px; background: #201a1d; color: #ecdfe5; box-shadow: 0 4px 10px rgba(0, 0, 0, .5); font-size: 15px; z-index: 2; }
.alert h2 { font-size: 19px; font-weight: 500; line-height: 28px; margin-bottom: 11px; }
.alert p { display: flex; align-items: center; gap: 6px; line-height: 25px; }
.alert .second { margin-top: 25px; }
.alert-actions { display: flex; justify-content: flex-end; gap: 11px; margin-top: 19px; }
.alert-actions button { width: 88px; height: 47px; border-radius: 23px; font-weight: 600; }
.ok { background: #f4b6ea; color: #5b2353; outline: 3px solid #f4b6ea; outline-offset: 2px; }
.cancel { background: #693363; color: #fad7f3; }

/* Taskbar */
.taskbar { flex: none; display: grid; grid-template-columns: 1fr auto 1fr; align-items: center; height: 60px; border-top: 1px solid #b8b2ba; color: #1a1a1a; font-size: 14px; background: linear-gradient(90deg, #dfdbde 0%, #dcd8e0 22%, #e7d3e7 30%, #dfd6e7 40%, #e3d5e6 70%, #d9d8e7 88%, #e0dadc 100%); }
.weather { display: flex; align-items: center; gap: 11px; padding-left: 27px; line-height: 20px; }
.weather span, .clock span { display: block; }
.muted { color: #555; }
.task-center { display: flex; align-items: center; }
.app { position: relative; width: 55px; height: 49px; }
.current::before { content: ""; position: absolute; inset: 0 3px; z-index: -1; border-radius: 5px; background: #f2edf4; }
.current { z-index: 0; }
.current::after, .running::after { content: ""; position: absolute; bottom: 0; left: 50%; margin-left: -4px; width: 8px; height: 4px; border-radius: 2px; background: #868089; }
.current::after { margin-left: -10px; width: 20px; background: #0a72cf; }
.task-search { display: flex; align-items: center; width: 273px; height: 38px; margin: 0 5px 0 4px; padding: 0 4px 0 12px; border: 1px solid #c9bfd0; border-radius: 19px; background: #f7f2f9; }
.task-search input { flex: 1; min-width: 0; margin-left: 12px; padding: 0; border: 0; background: none; font-size: 16px; }
.task-search input::placeholder { color: #555; }
.tray { display: flex; align-items: center; justify-content: flex-end; padding-right: 24px; line-height: 20px; }
.lang { margin: 0 22px 0 27px; }
.tray-icons { display: flex; gap: 8px; margin-right: 18px; }
.clock { min-width: 62px; text-align: right; }
```
